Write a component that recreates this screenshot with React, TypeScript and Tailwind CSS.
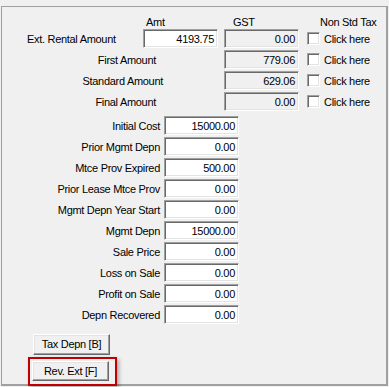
import React from 'react';

// Classic Win32-style sunken edit box and raised button bevels
const sunken =
  'border border-t-[#a0a0a0] border-l-[#a0a0a0] border-r-white border-b-white shadow-[inset_1px_1px_0_#696969,inset_-1px_-1px_0_#e3e3e3]';
const raised =
  'border border-t-white border-l-white border-r-[#696969] border-b-[#696969] shadow-[inset_-1px_-1px_0_#a0a0a0,inset_1px_1px_0_#e3e3e3]';

function NumBox({ value, disabled = false }: { value: string; disabled?: boolean }) {
  return (
    <div
      className={`${sunken} w-[75px] h-[19px] flex items-center justify-end pr-[3px] pt-[1px] ${
        disabled ? 'bg-[#f0f0f0]' : 'bg-white'
      }`}
    >
      {value}
    </div>
  );
}

function CheckCell() {
  return (
    <>
      <div className={`${sunken} ml-[8px] w-[13px] h-[13px] bg-white`} />
      <span className="ml-[4px] pt-[1px]">Click here</span>
    </>
  );
}

const taxRows = [
  { label: 'First Amount', gst: '779.06', pr: 'pr-[68px]' },
  { label: 'Standard Amount', gst: '629.06', pr: 'pr-[61px]' },
  { label: 'Final Amount', gst: '0.00', pr: 'pr-[68px]' },
];

const depnRows = [
  { label: 'Initial Cost', value: '15000.00' },
  { label: 'Prior Mgmt Depn', value: '0.00' },
  { label: 'Mtce Prov Expired', value: '500.00' },
  { label: 'Prior Lease Mtce Prov', value: '0.00' },
  { label: 'Mgmt Depn Year Start', value: '0.00' },
  { label: 'Mgmt Depn', value: '15000.00' },
  { label: 'Sale Price', value: '0.00' },
  { label: 'Loss on Sale', value: '0.00' },
  { label: 'Profit on Sale', value: '0.00' },
  { label: 'Depn Recovered', value: '0.00' },
];

export default function App() {
  return (
    <div className="relative w-[389px] h-[387px] overflow-hidden bg-[#f0f0f0] pt-[6px] pl-[1px] font-['Liberation_Sans',Arial,sans-serif] text-[11px] leading-[13px] tracking-[-0.3px] text-black">
      <div className="w-[387px] h-[380px] border-l border-t border-r-2 border-b-2 border-[#a0a0a0] pt-[9px]">
        {/* column headers */}
        <div className="flex h-[13px]">
          <div className="w-[141px]" />
          <div className="w-[75px] pl-[3px]">Amt</div>
          <div className="ml-[6px] w-[75px] pl-[9px]">GST</div>
          <div className="ml-[8px] pl-[13px]">Non Std Tax</div>
        </div>

        {/* tax amount rows */}
        <div className="flex flex-col gap-[2px]">
          <div className="flex items-center h-[19px]">
            <div className="w-[141px] pl-[25px] pt-[2px]">Ext. Rental Amount</div>
            <NumBox value="4193.75" />
            <div className="ml-[6px]">
              <NumBox value="0.00" disabled />
            </div>
            <CheckCell />
          </div>
          {taxRows.map((r) => (
            <div key={r.label} className="flex items-center h-[19px]">
              <div className={`w-[222px] text-right pt-[1px] ${r.pr}`}>{r.label}</div>
              <NumBox value={r.gst} disabled />
              <CheckCell />
            </div>
          ))}
        </div>

        {/* depreciation rows */}
        <div className="mt-[5px] flex flex-col gap-[2px]">
          {depnRows.map((r) => (
            <div key={r.label} className="flex items-center h-[19px]">
              <div className="w-[162px] text-right pr-[4px] pt-[1px]">{r.label}</div>
              <NumBox value={r.value} />
            </div>
          ))}
        </div>

        {/* buttons */}
        <div className="flex flex-col items-start">
          <button className={`${raised} mt-[10px] ml-[31px] w-[77px] h-[21px] bg-[#f0f0f0] flex items-center justify-center`}>
            Tax Depn [B]
          </button>
          <button className={`${raised} mt-[6px] ml-[30px] w-[77px] h-[20px] bg-[#f0f0f0] flex items-center justify-center`}>
            Rev. Ext [F]
          </button>
        </div>
      </div>

      {/* red highlight annotation over the Rev. Ext button */}
      <div className="absolute left-[28px] top-[357px] w-[89px] h-[29px] border-2 border-[#c00000] shadow-[2px_2px_4px_rgba(0,0,0,0.3)]" />
    </div>
  );
}
